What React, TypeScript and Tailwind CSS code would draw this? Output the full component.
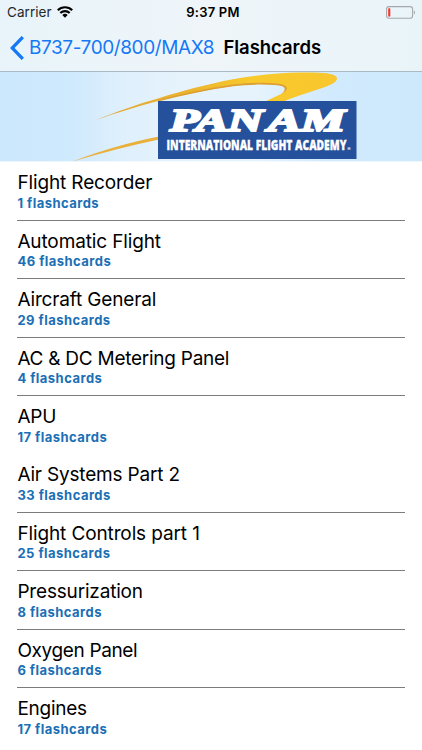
/**
 * FlashcardsPage - list of flashcard decks for the selected aircraft
 */

type Deck = {
  title: string;
  count: number;
  tracking: string;
  divider?: boolean;
};

const DECKS: Deck[] = [
  { title: 'Flight Recorder', count: 1, tracking: 'tracking-[-0.13px]' },
  { title: 'Automatic Flight', count: 46, tracking: 'tracking-[-0.13px]' },
  { title: 'Aircraft General', count: 29, tracking: 'tracking-[-0.15px]' },
  { title: 'AC & DC Metering Panel', count: 4, tracking: 'tracking-[-0.26px]' },
  { title: 'APU', count: 17, tracking: 'tracking-[-0.2px]', divider: false },
  { title: 'Air Systems Part 2', count: 33, tracking: 'tracking-[-0.18px]' },
  { title: 'Flight Controls part 1', count: 25, tracking: 'tracking-[-0.12px]' },
  { title: 'Pressurization', count: 8, tracking: 'tracking-[-0.18px]' },
  { title: 'Oxygen Panel', count: 6, tracking: 'tracking-[-0.36px]' },
  { title: 'Engines', count: 17, tracking: 'tracking-[-0.25px]', divider: false },
];

function WifiIcon() {
  return (
    <svg className="ml-[5px] h-3 w-4" viewBox="0 0 16 12" fill="none" stroke="#000" strokeWidth="2.1">
      <path d="M0.8 4.3a10.2 10.2 0 0 1 14.4 0" />
      <path d="M3.3 7.1a6.6 6.6 0 0 1 9.4 0" />
      <path d="M8 11.8 5.3 9.1a3.8 3.8 0 0 1 5.4 0z" fill="#000" stroke="none" />
    </svg>
  );
}

function BatteryIcon() {
  return (
    <svg className="h-[13px] w-[30px]" viewBox="0 0 30 13">
      <rect x="0.6" y="0.6" width="26" height="11.6" rx="2.4" fill="none" stroke="#a5a9ab" strokeWidth="1.1" />
      <rect x="2.2" y="2.2" width="2.1" height="8.4" rx="0.6" fill="#f5352b" />
      <path d="M27.9 4.4c1.5.6 1.5 3.4 0 4z" fill="#a5a9ab" />
    </svg>
  );
}

function StatusBar() {
  return (
    <div className="grid h-6 grid-cols-3 items-center pr-[6px] pl-[7px] text-[13.5px] leading-6">
      <div className="flex items-center">
        <span className="tracking-[0.05px] text-[#25282a]">Carrier</span>
        <WifiIcon />
      </div>
      <span className="pl-[3px] text-center text-[13px] font-semibold tracking-[0.2px] whitespace-nowrap">
        9:37 PM
      </span>
      <div className="flex justify-end">
        <BatteryIcon />
      </div>
    </div>
  );
}

function NavBar() {
  return (
    <div className="flex h-[47px] items-center pt-px pl-[10px] whitespace-nowrap">
      <svg className="h-6 w-[14px] shrink-0" viewBox="0 0 14 24" fill="none" stroke="#1579f6" strokeWidth="3.3">
        <path d="M12.8 1.1 2.2 12l10.6 10.9" />
      </svg>
      <span className="ml-[5px] w-[194.5px] text-[19px] tracking-[-0.41px] text-[#1579f6]">B737-700/800/MAX8</span>
      <h1 className="text-[18.5px] font-semibold tracking-[-0.05px] text-black">Flashcards</h1>
    </div>
  );
}

function Banner() {
  return (
    <svg className="block h-[90px] w-full shrink-0" viewBox="0 72 422 90">
      <defs>
        <linearGradient id="sky" x1="0" x2="1">
          <stop offset="0" stopColor="#cce8fd" />
          <stop offset="0.17" stopColor="#cfe9fd" />
          <stop offset="0.29" stopColor="#dff0fc" />
          <stop offset="0.45" stopColor="#e6f3fc" />
          <stop offset="0.6" stopColor="#e6f3fc" />
          <stop offset="0.78" stopColor="#d1eafd" />
          <stop offset="1" stopColor="#cee9fd" />
        </linearGradient>
        <linearGradient id="swoosh" x1="0" x2="1">
          <stop offset="0" stopColor="#e0a535" />
          <stop offset="0.4" stopColor="#ecb52e" />
          <stop offset="0.65" stopColor="#f8ca2c" />
          <stop offset="1" stopColor="#f8c62e" />
        </linearGradient>
      </defs>
      <rect x="0" y="72" width="422" height="89.6" fill="url(#sky)" />
      <rect x="0" y="161.6" width="422" height="1" fill="#fff" />
      <path
        d="M96 120C115 112 138 104 158 98.4C182 91 208 84 233 79.3C256 75 280 72.9 300 72.6C318 72.2 337 72.5 337 78.5C337 86 310 90.5 282 102H264L281 94C289 90 288 86 277 84.8C262 83.2 247 83.8 233 85.7C207 89.2 182 95 158 101C137 106.5 116 113 96 120Z"
        fill="url(#swoosh)"
      />
      <path
        d="M158 100C182 94 207 88.2 233 84.6C250 82.2 266 82.2 277 83.6C289 85 290 90 281 94C286 90 287 86.2 277 85.3C262 84 247 84.6 233 86.2C207 89.7 182 95.5 158 101.4Z"
        fill="#dda032"
      />
      <path d="M72.5 161.5C101 150.5 130 142.5 159 136.6V139.6C130 145.5 102 153 72.5 161.5Z" fill="#e9b03c" />
      <rect x="158" y="101" width="198.5" height="58" fill="#25509b" />
      <g
        className="font-['Liberation_Serif'] text-[31px] font-bold italic"
        fill="#fff"
        stroke="#fff"
        strokeWidth="2.2"
      >
        <text x="170" y="131.4" textLength="93" lengthAdjust="spacingAndGlyphs">
          PAN
        </text>
        <text x="268" y="131.4" textLength="77" lengthAdjust="spacingAndGlyphs">
          AM
        </text>
      </g>
      <text
        x="166.5"
        y="149.5"
        textLength="180"
        lengthAdjust="spacingAndGlyphs"
        className="font-['Open_Sans'] text-[13.5px] font-extrabold"
        fill="#fff"
        stroke="#fff"
        strokeWidth="0.3"
      >
        INTERNATIONAL FLIGHT ACADEMY
      </text>
      <text x="347.2" y="150.5" className="font-['Inter'] text-[5px] font-bold" fill="#fff">
        ®
      </text>
    </svg>
  );
}

function DeckRow({ deck }: { deck: Deck }) {
  const hasDivider = deck.divider !== false;

  return (
    <li
      className={`h-[58.4px] border-b pt-[9px] whitespace-nowrap ${
        hasDivider ? 'border-[#7c7c7e]' : 'border-transparent'
      }`}
    >
      <div className={`text-[19px] leading-6 text-black ${deck.tracking}`}>{deck.title}</div>
      <div className="-mt-[0.4px] text-[13px] leading-4 font-bold tracking-[0.47px] text-[#1b6fb5]">
        {deck.count} flashcards
      </div>
    </li>
  );
}

export default function App() {
  return (
    <div className="flex h-[750px] w-[422px] flex-col overflow-hidden bg-white font-['Inter',sans-serif]">
      <header className="h-[72px] shrink-0 border-b border-[#a9bac6] bg-linear-to-r from-[#e8f4fa] via-[#eff5f9] to-[#e9f4f9]">
        <StatusBar />
        <NavBar />
      </header>
      <Banner />
      <ul className="pt-[0.4px] pr-[17px] pl-[17.4px]">
        {DECKS.map((deck) => (
          <DeckRow key={deck.title} deck={deck} />
        ))}
      </ul>
    </div>
  );
}
